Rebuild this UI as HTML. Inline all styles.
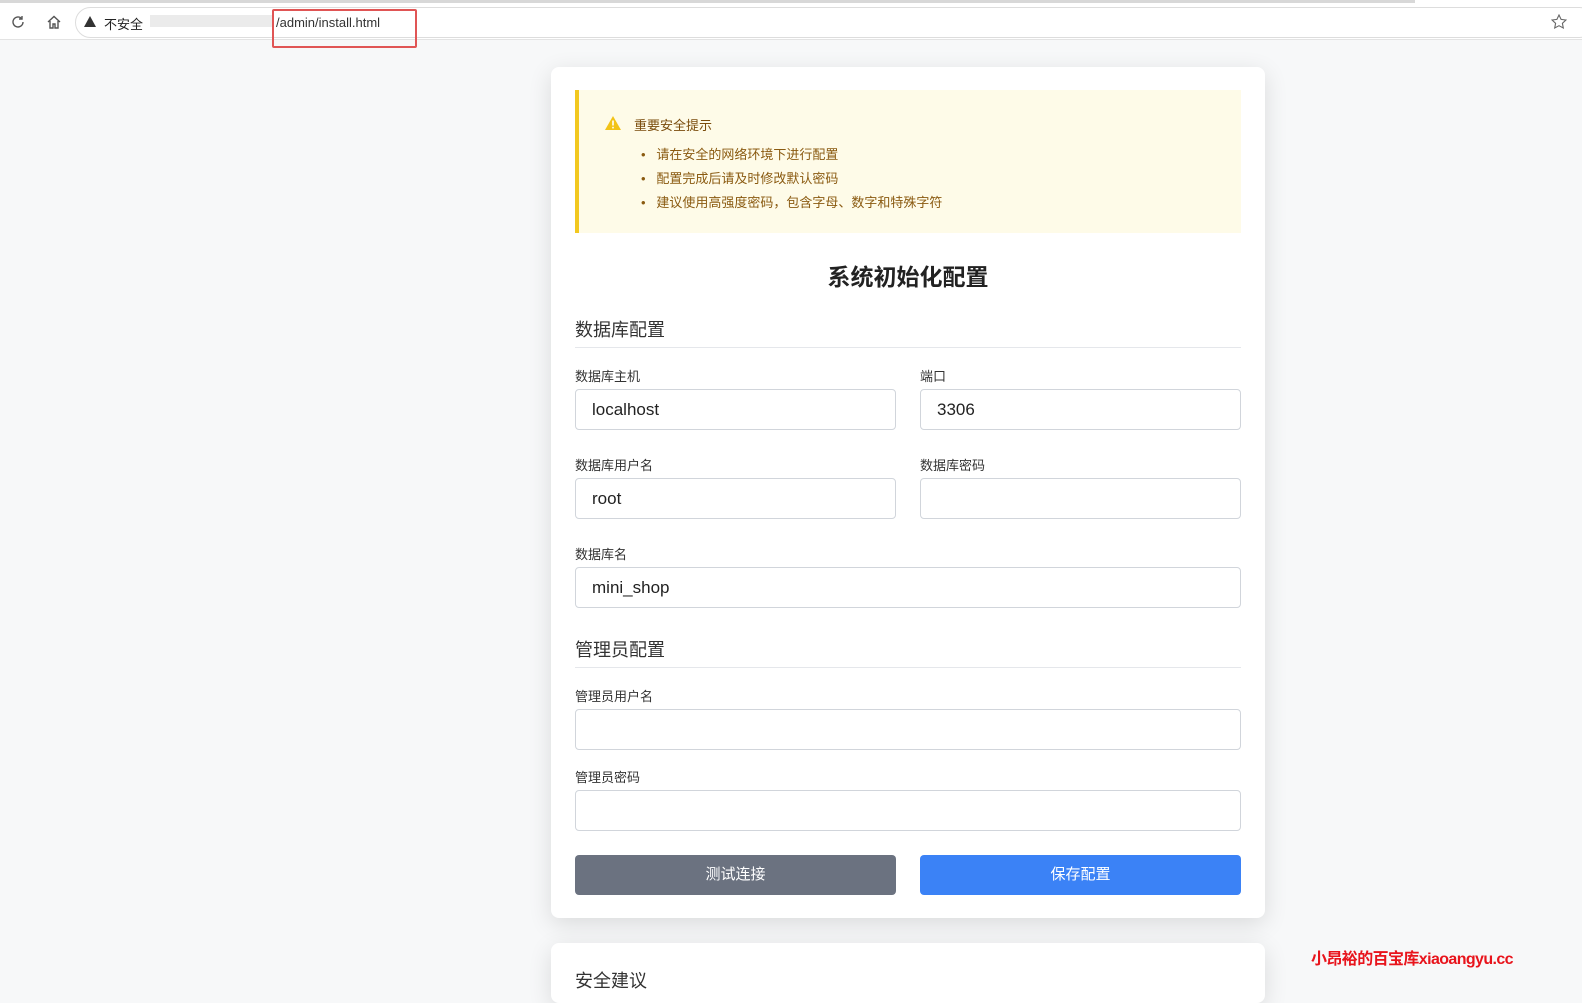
<!DOCTYPE html>
<html><head><meta charset="utf-8"><style>
*{box-sizing:border-box;margin:0;padding:0}
body{width:1582px;height:983px;overflow:hidden;background:#f7f8f9;font-family:"Liberation Sans","Noto Sans CJK SC",sans-serif;color:#333;position:relative}
.top{position:absolute;left:0;top:0;width:1582px;height:40px;background:#fff;border-bottom:1px solid #e3e3e3}
.top .line{position:absolute;left:0;top:0;width:1415px;height:3px;background:#d8d8d8}
.url{position:absolute;left:75px;top:7px;width:1520px;height:31px;border:1px solid #ddd;border-radius:16px;background:#fff}
.abs{position:absolute}
.card{position:absolute;left:551px;top:67px;width:714px;height:851px;background:#fff;border-radius:8px;box-shadow:0 6px 24px rgba(0,0,0,.12)}
.card2{position:absolute;left:551px;top:943px;width:714px;height:60px;background:#fff;border-radius:8px;box-shadow:0 6px 24px rgba(0,0,0,.12)}
.alert{position:absolute;left:24px;top:23px;width:666px;height:143px;background:#fefbe8;border-left:4px solid #f2c81f}
.lbl{position:absolute;font-size:13px;color:#333}
.inp{position:absolute;height:41px;border:1px solid #d1d5db;border-radius:4px;font-size:17px;color:#222;padding:10px 16px}
.sec{position:absolute;left:24px;width:666px;font-size:18px;color:#333;border-bottom:1px solid #e5e7eb;height:32px}
.btn{position:absolute;top:788px;width:321px;height:40px;border-radius:4px;color:#fff;font-size:15px;text-align:center;line-height:40px}
</style></head><body>
<div class="top"><div class="line"></div>
<svg class="abs" style="left:10px;top:14px" width="16" height="16" viewBox="0 0 16 16"><path d="M13 8a5 5 0 1 1-1.6-3.7" fill="none" stroke="#555" stroke-width="1.4"/><path d="M12 2v3h-3" fill="none" stroke="#555" stroke-width="1.4"/></svg>
<svg class="abs" style="left:46px;top:14px" width="16" height="16" viewBox="0 0 16 16"><path d="M2 8L8 2.5 14 8M4 7v7h3v-4h2v4h3V7" fill="none" stroke="#555" stroke-width="1.4"/></svg>
<div class="url"></div>
<svg class="abs" style="left:84px;top:16px" width="12" height="11" viewBox="0 0 12 11"><path d="M6 0L12 11H0z" fill="#333"/></svg>
<div class="abs" style="left:104px;top:14px;font-size:13px;color:#222">不安全</div>
<div class="abs" style="left:150px;top:15px;width:122px;height:12px;background:#e6e6e6;opacity:.8"></div>
<div class="abs" style="left:276px;top:15px;font-size:13px;color:#333">/admin/install.html</div>
<div class="abs" style="left:272px;top:9px;width:145px;height:39px;border:2px solid #e05555;border-radius:2px"></div>
<svg class="abs" style="left:1551px;top:14px" width="16" height="16" viewBox="0 0 16 16"><path d="M8 1l2.1 4.4 4.8.6-3.5 3.3.9 4.7L8 11.7 3.7 14l.9-4.7L1.1 6l4.8-.6z" fill="none" stroke="#666" stroke-width="1.1"/></svg>
</div>
<div class="card">
<div class="alert">
<svg class="abs" style="left:26px;top:26px" width="16" height="14" viewBox="0 0 16 14"><path d="M8 0L16 14H0z" fill="#f2c318"/><rect x="7.2" y="4.5" width="1.6" height="5" fill="#fff"/><rect x="7.2" y="10.8" width="1.6" height="1.6" fill="#fff"/></svg>
<div class="abs" style="left:55px;top:25px;font-size:13px;color:#7a4c0c">重要安全提示</div>
<div class="abs" style="left:62px;top:53px;font-size:13px;color:#8a5a10;line-height:24px">
<div>•&nbsp;&nbsp;&nbsp;请在安全的网络环境下进行配置</div>
<div>•&nbsp;&nbsp;&nbsp;配置完成后请及时修改默认密码</div>
<div>•&nbsp;&nbsp;&nbsp;建议使用高强度密码，包含字母、数字和特殊字符</div></div>
</div>
<div class="abs" style="left:0;width:714px;top:191px;text-align:center;font-size:23px;font-weight:bold;color:#222">系统初始化配置</div>
<div class="sec" style="top:249px">数据库配置</div>
<div class="lbl" style="left:24px;top:299px">数据库主机</div>
<div class="inp" style="left:24px;top:322px;width:321px">localhost</div>
<div class="lbl" style="left:369px;top:299px">端口</div>
<div class="inp" style="left:369px;top:322px;width:321px">3306</div>
<div class="lbl" style="left:24px;top:388px">数据库用户名</div>
<div class="inp" style="left:24px;top:411px;width:321px">root</div>
<div class="lbl" style="left:369px;top:388px">数据库密码</div>
<div class="inp" style="left:369px;top:411px;width:321px"></div>
<div class="lbl" style="left:24px;top:477px">数据库名</div>
<div class="inp" style="left:24px;top:500px;width:666px">mini_shop</div>
<div class="sec" style="top:569px">管理员配置</div>
<div class="lbl" style="left:24px;top:619px">管理员用户名</div>
<div class="inp" style="left:24px;top:642px;width:666px"></div>
<div class="lbl" style="left:24px;top:700px">管理员密码</div>
<div class="inp" style="left:24px;top:723px;width:666px"></div>
<div class="btn" style="left:24px;background:#6b7280">测试连接</div>
<div class="btn" style="left:369px;background:#3b82f6">保存配置</div>
</div>
<div class="card2"><div class="abs" style="left:24px;top:24px;font-size:18px">安全建议</div></div>
<div class="abs" style="left:1311px;top:945px;font-size:16px;font-weight:bold;color:#e8141c;letter-spacing:-0.6px">小昂裕的百宝库xiaoangyu.cc</div>
</body></html>
